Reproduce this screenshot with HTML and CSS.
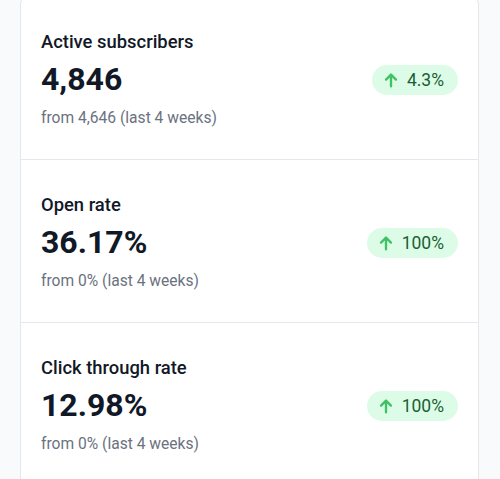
FILE: index.html
```html
<!DOCTYPE html>
<html lang="en">
<head>
<meta charset="UTF-8">
<meta name="viewport" content="width=device-width, initial-scale=1.0">
<title>Stats</title>
<link rel="stylesheet" href="styles.css">
</head>
<body>

<div class="stats">
    <div class="stat">
        <div class="stat-name">Active subscribers</div>
        <div class="stat-row">
            <div class="stat-value">4,846</div>
            <span class="badge">
                <svg class="badge-icon" viewBox="0 0 20 20" fill="none" stroke="currentColor" stroke-width="2.6" stroke-linecap="round" stroke-linejoin="round"><path d="M10 17V4M4.5 9.5L10 4l5.5 5.5"/></svg>
                4.3%
            </span>
        </div>
        <div class="stat-from">from 4,646 (last 4 weeks)</div>
    </div>
    <div class="stat">
        <div class="stat-name">Open rate</div>
        <div class="stat-row">
            <div class="stat-value">36.17%</div>
            <span class="badge">
                <svg class="badge-icon" viewBox="0 0 20 20" fill="none" stroke="currentColor" stroke-width="2.6" stroke-linecap="round" stroke-linejoin="round"><path d="M10 17V4M4.5 9.5L10 4l5.5 5.5"/></svg>
                100%
            </span>
        </div>
        <div class="stat-from">from 0% (last 4 weeks)</div>
    </div>
    <div class="stat">
        <div class="stat-name">Click through rate</div>
        <div class="stat-row">
            <div class="stat-value">12.98%</div>
            <span class="badge">
                <svg class="badge-icon" viewBox="0 0 20 20" fill="none" stroke="currentColor" stroke-width="2.6" stroke-linecap="round" stroke-linejoin="round"><path d="M10 17V4M4.5 9.5L10 4l5.5 5.5"/></svg>
                100%
            </span>
        </div>
        <div class="stat-from">from 0% (last 4 weeks)</div>
    </div>
</div>

</body>
</html>
```

FILE: styles.css
```css
body {
    margin: 0;
    font-family: Roboto, "Liberation Sans", sans-serif;
    background-color: #f9fafb;
    color: #111827;
}
.stats {
    margin: -4px 21px 0 20px;
    background-color: white;
    border: 1px solid #e5e7eb;
    border-radius: 8px;
}
.stat {
    padding: 31px 20px 30px 20px;
    border-top: 1px solid #e5e7eb;
}
.stat:first-child {
    border-top: none;
    padding-top: 31px;
}
.stat-name {
    font-size: 18.4px;
    line-height: 28px;
    font-weight: 500;
}
.stat-row {
    display: flex;
    align-items: center;
    justify-content: space-between;
    margin-top: 3px;
}
.stat-value {
    font-size: 32px;
    line-height: 40px;
    font-weight: 700;
}
.stat-from {
    margin-top: 8px;
    font-size: 15.6px;
    line-height: 22px;
    color: #6b7280;
}
.badge {
    display: flex;
    align-items: center;
    gap: 7px;
    height: 30px;
    margin-top: 2px;
    padding: 0 14px 0 10px;
    border-radius: 15px;
    background-color: #dcfce7;
    color: #1b5e35;
    font-size: 17.5px;
}
.badge-icon {
    width: 18px;
    height: 18px;
    color: #3fc263;
}
```
